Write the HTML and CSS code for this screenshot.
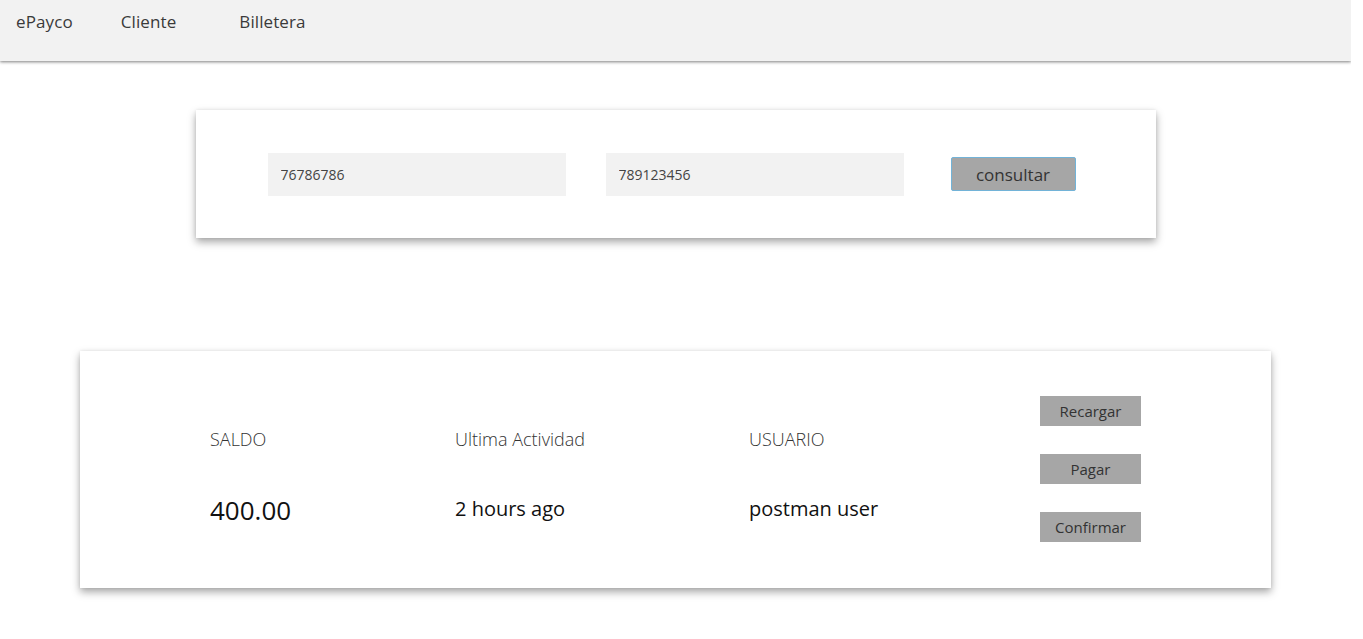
FILE: index.html
```html
<!DOCTYPE html>
<html lang="es">
<head>
<meta charset="utf-8">
<title>ePayco</title>
<link rel="stylesheet" href="styles.css">
</head>
<body>
<nav class="navbar">
  <a class="nav-brand" href="#">ePayco</a>
  <a class="nav-link" href="#">Cliente</a>
  <a class="nav-link nav-link-wide" href="#">Billetera</a>
</nav>
<main class="main">
  <section class="card search-card">
    <input class="field" type="text" value="76786786">
    <input class="field" type="text" value="789123456">
    <button class="btn-consult" type="button">consultar</button>
  </section>
  <section class="card wallet-card">
    <div class="info-col">
      <div class="info-label">SALDO</div>
      <div class="info-value info-value-big">400.00</div>
    </div>
    <div class="info-col">
      <div class="info-label">Ultima Actividad</div>
      <div class="info-value">2 hours ago</div>
    </div>
    <div class="info-col">
      <div class="info-label">USUARIO</div>
      <div class="info-value">postman user</div>
    </div>
    <div class="actions">
      <button class="btn-action" type="button">Recargar</button>
      <button class="btn-action" type="button">Pagar</button>
      <button class="btn-action" type="button">Confirmar</button>
    </div>
  </section>
</main>
</body>
</html>
```
FILE: styles.css
```css
* { box-sizing: border-box; }
html, body { margin: 0; padding: 0; }
body {
  margin-right: 12px;
  font-family: "Open Sans", "Noto Sans", sans-serif;
  color: #333;
  background: #fff;
}
.navbar {
  height: 61px;
  background: #f2f2f2;
  box-shadow: 0 1px 3px rgba(0,0,0,0.5);
  display: flex;
  align-items: flex-start;
  padding: 12px 0 0 16px;
  position: relative;
  z-index: 1;
}
.navbar a {
  color: #3a3a3a;
  text-decoration: none;
  font-size: 17px;
  line-height: 20px;
  font-weight: 400;
  letter-spacing: 0.1px;
}
.nav-brand { margin-right: 48px; }
.nav-link { margin-right: 63px; }
.main {
  padding: 49px 0 80px;
  display: flex;
  flex-direction: column;
  align-items: center;
}
.card {
  background: #fff;
  box-shadow: 0 4px 8px rgba(0,0,0,0.35), 0 0 3px rgba(0,0,0,0.08);
}
.search-card {
  width: 960px;
  height: 128px;
  display: flex;
  align-items: center;
  padding: 0 0 0 72px;
}
.field {
  width: 298px;
  height: 43px;
  border: none;
  background: #f2f2f2;
  padding: 0 13px;
  font-family: inherit;
  font-size: 14px;
  color: #444;
  margin-right: 40px;
  outline: none;
}
.btn-consult {
  margin-left: 7px;
  width: 125px;
  height: 34px;
  background: #a6a6a6;
  border: 1px solid #72b3d8;
  border-radius: 2px;
  font-family: inherit;
  font-size: 17px;
  color: #333;
  padding: 0;
}
.wallet-card {
  margin-top: 113px;
  width: 1191px;
  height: 237px;
  padding: 45px 130px 46px;
  display: grid;
  grid-template-columns: 245px 294px 291px 101px;
  align-items: start;
}
.info-col {
  padding-top: 32px;
  display: flex;
  flex-direction: column;
}
.info-label {
  font-size: 18px;
  line-height: 22px;
  font-weight: 300;
  color: #333;
}
.info-value {
  margin-top: 46px;
  font-size: 20px;
  line-height: 26px;
  font-weight: 500;
  color: #111;
}
.info-value-big {
  font-size: 26px;
  line-height: 30px;
  margin-top: 45px;
}
.actions {
  display: flex;
  flex-direction: column;
  gap: 28px;
}
.btn-action {
  width: 101px;
  height: 30px;
  background: #a6a6a6;
  border: none;
  font-family: inherit;
  font-size: 15px;
  color: #333;
  padding: 0;
}
```
